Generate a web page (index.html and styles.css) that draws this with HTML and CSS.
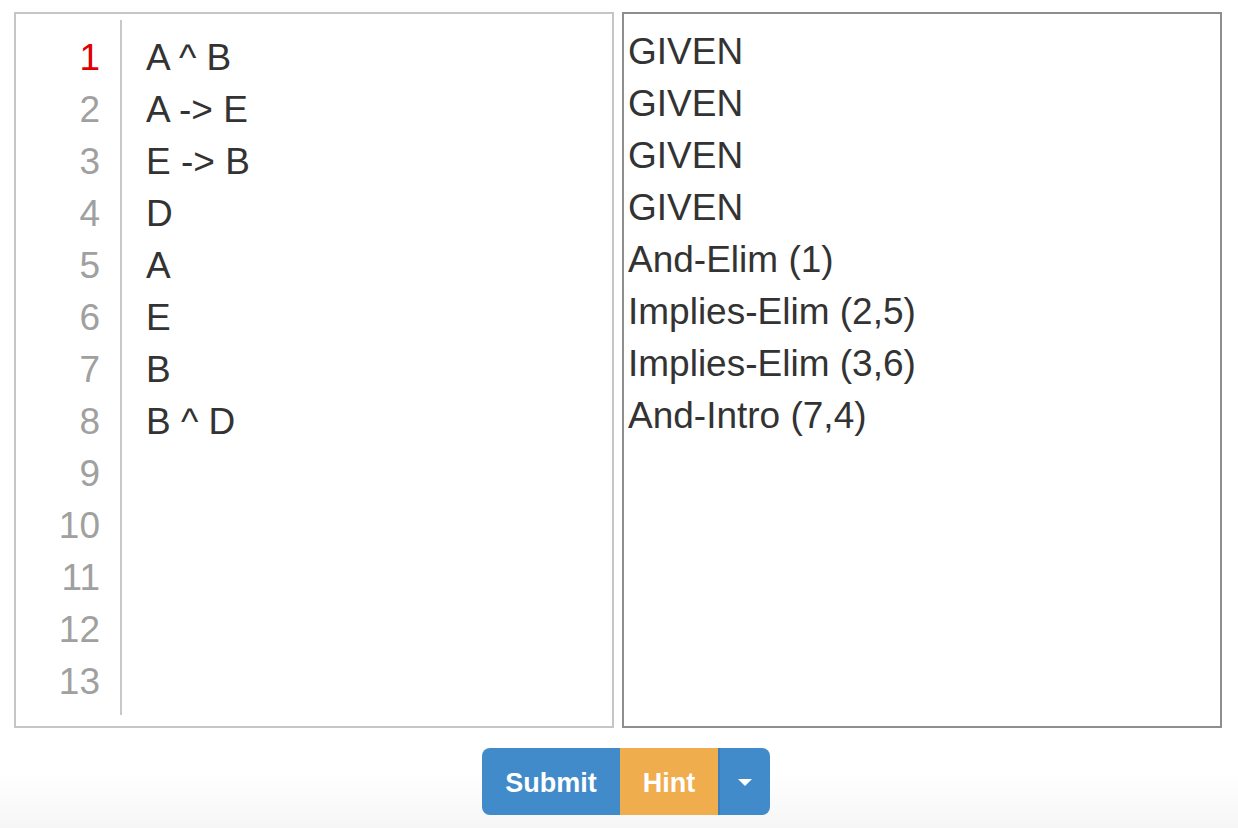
FILE: index.html
```html
<!DOCTYPE html>
<html>
<head>
<meta charset="utf-8">
<link rel="stylesheet" href="styles.css">
</head>
<body>
<div class="panels">
  <div class="panel editor">
    <div class="cm">
      <div class="gutter">
        <div class="num current">1</div>
        <div class="num">2</div>
        <div class="num">3</div>
        <div class="num">4</div>
        <div class="num">5</div>
        <div class="num">6</div>
        <div class="num">7</div>
        <div class="num">8</div>
        <div class="num">9</div>
        <div class="num">10</div>
        <div class="num">11</div>
        <div class="num">12</div>
        <div class="num">13</div>
      </div>
      <div class="lines">
        <div class="line">A ^ B</div>
        <div class="line">A -&gt; E</div>
        <div class="line">E -&gt; B</div>
        <div class="line">D</div>
        <div class="line">A</div>
        <div class="line">E</div>
        <div class="line">B</div>
        <div class="line">B ^ D</div>
      </div>
    </div>
  </div>
  <div class="panel rules">
    <div class="line">GIVEN</div>
    <div class="line">GIVEN</div>
    <div class="line">GIVEN</div>
    <div class="line">GIVEN</div>
    <div class="line">And-Elim (1)</div>
    <div class="line">Implies-Elim (2,5)</div>
    <div class="line">Implies-Elim (3,6)</div>
    <div class="line">And-Intro (7,4)</div>
  </div>
</div>
<div class="actions">
  <div class="btn-group">
    <button class="btn btn-primary">Submit</button>
    <button class="btn btn-warning">Hint</button>
    <button class="btn btn-primary btn-caret"><span class="caret"></span></button>
  </div>
</div>
</body>
</html>
```
FILE: styles.css
```css
html, body {
  margin: 0;
  height: 100%;
}
body {
  padding: 12px 16px 0 14px;
  box-sizing: border-box;
  font-family: "Liberation Sans", Arial, Helvetica, sans-serif;
  color: #333;
  background: linear-gradient(to bottom, #fff 0, #fff 772px, #f6f6f6 828px);
}
.panels {
  display: flex;
  gap: 8px;
}
.panel {
  width: 600px;
  height: 716px;
  box-sizing: border-box;
  background: #fff;
}
.editor {
  border: 2px solid #c6c6c6;
  padding-top: 6px;
}
.rules {
  border: 2px solid #8e8e8e;
  padding: 12px 4px 10px;
}
.cm {
  display: flex;
  height: 695px;
}
.gutter {
  border-right: 2px solid #c8c8c8;
  padding: 12px 20px 0 0;
  width: 84px;
  text-align: right;
}
.num, .line {
  font-size: 37px;
  line-height: 52px;
  height: 52px;
  white-space: pre;
}
.num {
  color: #a0a0a0;
}
.num.current {
  color: #e00000;
}
.lines {
  padding: 12px 0 0 24px;
}
.actions {
  display: flex;
  justify-content: center;
  margin-left: 16px;
  padding-top: 20px;
}
.btn-group {
  display: flex;
}
.btn {
  height: 67px;
  border: 0;
  margin: 0;
  font-family: "Liberation Sans", Arial, Helvetica, sans-serif;
  font-weight: bold;
  font-size: 27px;
  color: #fff;
  padding: 3px 0 0;
  cursor: pointer;
}
.btn-primary {
  background: #428bca;
}
.btn-warning {
  background: #f0ad4e;
  width: 98px;
}
.btn-group .btn:first-child {
  border-radius: 8px 0 0 8px;
  width: 138px;
}
.btn-caret {
  width: 52px;
  border-radius: 0 8px 8px 0;
  border-left: 2px solid #3a7fbd;
  display: flex;
  align-items: center;
  justify-content: center;
  padding: 0;
}
.caret {
  width: 0;
  height: 0;
  border-top: 7px solid #fff;
  border-left: 7px solid transparent;
  border-right: 7px solid transparent;
  margin-top: 2px;
}
```
